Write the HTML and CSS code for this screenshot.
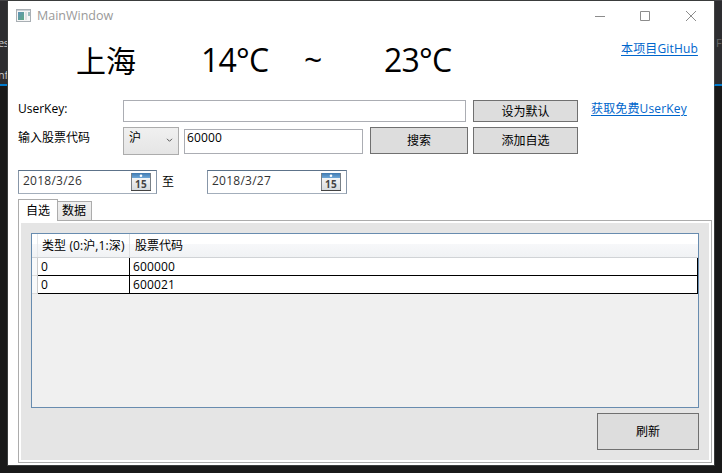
FILE: index.html
```html
<!DOCTYPE html>
<html lang="zh-CN">
<head>
<meta charset="utf-8">
<title>MainWindow</title>
<link rel="stylesheet" href="styles.css">
</head>
<body>
<div class="desktop">
  <aside class="behind left"><span class="frag es">es</span><span class="frag nf">nf</span></aside>
  <main class="window">
    <header class="titlebar">
      <svg class="app-icon" width="16" height="14" viewBox="0 0 16 14">
        <defs><linearGradient id="app" x1="0" y1="0" x2="1" y2="1"><stop offset="0" stop-color="#5f93b8"/><stop offset="1" stop-color="#5fa884"/></linearGradient></defs>
        <rect x=".5" y=".5" width="14" height="12" fill="#f6f6f6" stroke="#a9afb4"/>
        <path d="M1 1.5h13" stroke="#c9d0d6"/>
        <rect x="2" y="3" width="6" height="8" fill="url(#app)"/>
        <rect x="9" y="3" width="2" height="8" fill="#dfe2e4"/>
        <rect x="12" y="3" width="2" height="4" fill="#9dbfc0"/>
      </svg>
      <span class="title">MainWindow</span>
      <svg class="controls" width="103" height="12" viewBox="0 0 103 12" fill="none" stroke="#8c8c8c">
        <path d="M0 6.500h10M45.500 1.500h9v9h-9zM91 1l10 10M101 1l-10 10"/>
      </svg>
    </header>

    <section class="weather">
      <span class="city">上海</span><span class="low">14°C</span><span class="tilde">~</span><span class="high">23°C</span>
      <a class="link github">本项目GitHub</a>
    </section>

    <section class="row key-row">
      <label class="label">UserKey:</label>
      <div class="input key-input"></div>
      <button class="button wide">设为默认</button>
      <a class="link get-key">获取免费UserKey</a>
    </section>

    <section class="row code-row">
      <label class="label">输入股票代码</label>
      <div class="combo"><span>沪</span><svg width="7" height="5" viewBox="0 0 7 5" fill="none" stroke="#555"><path d="M1 .8l2.500 2.500L6 .8"/></svg></div>
      <div class="input code-input">60000</div>
      <button class="button search">搜索</button>
      <button class="button wide">添加自选</button>
    </section>

    <section class="row date-row">
      <div class="date"><span>2018/3/26</span>
        <svg class="cal" width="20" height="18" viewBox="0 0 20 18">
          <defs><linearGradient id="blue" x2="0" y2="1"><stop stop-color="#3f79b0"/><stop offset="1" stop-color="#6fa8d8"/></linearGradient><linearGradient id="page" x2="0" y2="1"><stop stop-color="#fff"/><stop offset="1" stop-color="#d5dadd"/></linearGradient></defs>
          <rect x=".5" y=".5" width="19" height="17" fill="url(#page)" stroke="#788087"/><path d="M0 17.500h20" stroke="#444"/>
          <rect x="1" y="0" width="18" height="5" fill="url(#blue)"/><circle cx="10" cy="2.700" r="1.300" fill="#fff"/>
          <text x="10" y="15" text-anchor="middle" class="cal-day">15</text>
        </svg>
      </div>
      <span class="to">至</span>
      <div class="date second"><span>2018/3/27</span>
        <svg class="cal" width="20" height="18" viewBox="0 0 20 18">
          <rect x=".5" y=".5" width="19" height="17" fill="url(#page)" stroke="#788087"/><path d="M0 17.500h20" stroke="#444"/>
          <rect x="1" y="0" width="18" height="5" fill="url(#blue)"/><circle cx="10" cy="2.700" r="1.300" fill="#fff"/>
          <text x="10" y="15" text-anchor="middle" class="cal-day">15</text>
        </svg>
      </div>
    </section>

    <nav class="tabs"><span class="tab active">自选</span><span class="tab">数据</span></nav>
    <section class="panel">
      <div class="panel-body">
        <div class="grid">
          <div class="grid-head"><span class="corner"></span><span class="head type">类型 (0:沪,1:深)</span><span class="head">股票代码</span></div>
          <div class="grid-row"><span class="row-head"></span><span class="cell type">0</span><span class="cell code">600000</span></div>
          <div class="grid-row"><span class="row-head"></span><span class="cell type">0</span><span class="cell code">600021</span></div>
        </div>
        <button class="button refresh">刷新</button>
      </div>
    </section>
  </main>
  <aside class="behind right"><span class="frag f">F</span></aside>
</div>
</body>
</html>
```

FILE: styles.css
```css
* { box-sizing: border-box; }
body {
  margin: 0;
  width: 722px;
  height: 473px;
  overflow: hidden;
  font: 12px/16px "Open Sans", "Noto Sans CJK SC", sans-serif;
  color: #000;
}
.desktop { display: flex; height: 473px; padding-top: 1px; background: #191919; box-shadow: inset 0 1px #434346; }
.behind { flex: none; height: 85px; background: #2d2d30; border-bottom: 2px solid #007acc; overflow: hidden; }
.left { width: 8px; border-right: 1px solid #333; }
.right { width: 8px; border-left: 1px solid #444; }
.frag { display: block; color: #c8c8c8; font-size: 11px; }
.es { margin: 34px 0 0 -2px; letter-spacing: -.5px; }
.nf { margin: 16px 0 0 -2px; letter-spacing: -.3px; }
.f { margin: 34px 0 0 1px; color: #666; }
.window { flex: none; width: 706px; height: 464px; background: #fff; box-shadow: 0 0 0 1px #3a3c3c; }

.titlebar { display: flex; align-items: center; height: 29px; padding-left: 8px; }
.title { margin-left: 5px; color: #999; font-size: 12.5px; }
.controls { margin-left: auto; margin-right: 16px; }

.weather { display: flex; height: 70px; font-size: 32px; line-height: 60px; white-space: nowrap; letter-spacing: -.8px; }
.city { width: 125px; margin-left: 68px; font-size: 30px; letter-spacing: 0; line-height: 62px; }
.low { width: 103px; }
.tilde { width: 80px; }
.high { width: 237px; }
.link { color: #0066cc; font-size: 12px; line-height: 16px; letter-spacing: .15px; text-decoration: underline; text-underline-offset: 2px; white-space: nowrap; }
.github { margin-top: 11px; }

.row { display: flex; align-items: flex-start; padding-left: 10px; }
.key-row { height: 27px; }
.code-row { height: 43px; }
.date-row { height: 29px; }
.label { width: 105px; white-space: nowrap; }
.key-row .label, .get-key { padding-top: 1px; }
.code-row .label { padding-top: 3px; }
.input { border: 1px solid #abadb3; background: #fff; }
.key-input { width: 343px; height: 22px; margin-right: 7px; }
.code-input { width: 179px; height: 25px; margin: 2px 7px 0 5px; padding-left: 2px; letter-spacing: .15px; }
.button { margin: 0; padding: 1px 0 0; border: 1px solid #707070; border-radius: 0; background: #ddd; color: #000; font: inherit; text-align: center; }
.wide { width: 105px; height: 27px; }
.key-row .wide { height: 22px; padding-top: 2px; }
.get-key { margin-left: 13px; }
.search { width: 98px; height: 27px; margin-right: 5px; }
.combo { display: flex; justify-content: space-between; width: 56px; height: 28px; padding: 2px 5px; border: 1px solid #acacac; background: linear-gradient(#f0f0f0, #e5e5e5); }
.combo svg { margin-top: 8px; }
.date { display: flex; justify-content: space-between; width: 139px; height: 24px; padding: 2px 5px 0 4px; border: 1px solid; border-color: #5d738a #8796a8 #a3aebb; color: #333; letter-spacing: .25px; }
.date.second { width: 140px; }
.cal-day { font: bold 10px "Open Sans", sans-serif; fill: #444; }
.to { width: 50px; padding: 4px 0 0 5px; }

.tabs { display: flex; align-items: flex-end; height: 21px; padding-left: 10px; }
.tab { width: 34px; height: 19px; padding-left: 4px; border: 1px solid #acacac; border-left: 0; border-bottom: 0; background: linear-gradient(#f0f0f0, #e5e5e5); line-height: 18px; }
.tab.active { width: 40px; height: 22px; margin-bottom: -1px; padding-left: 7px; border-left: 1px solid #acacac; background: #fff; line-height: 21px; z-index: 1; }
.panel { width: 694px; height: 243px; margin-left: 10px; padding: 2px; border: 1px solid #acacac; background: #fff; }
.panel-body { display: flex; flex-direction: column; height: 237px; padding: 10px 10px 0; background: #e5e5e5; }
.grid { height: 175px; border: 1px solid #688caf; background: #f0f0f0; }
.grid-head { display: flex; height: 24px; border-bottom: 1px solid #d0d3d6; background: linear-gradient(#fff 0 42%, #f7f8fa 43%, #f0f2f4); }
.corner, .row-head { width: 6px; border-right: 1px solid #ccc; }
.corner { border-right-color: #e6e8ea; }
.head { padding: 4px 0 0 5px; white-space: nowrap; }
.head.type { width: 92px; padding-left: 4px; border-right: 1px solid #dfe1e3; letter-spacing: .1px; }
.grid-row { display: flex; height: 18px; }
.row-head { background: #f8f9fa; border-bottom: 1px solid #ddd; }
.cell { border-right: 1px solid #000; border-bottom: 1px solid #000; background: #fff; padding-left: 3px; line-height: 18px; letter-spacing: .15px; }
.cell.type { width: 92px; }
.cell.code { flex: 1; }
.refresh { align-self: flex-end; width: 102px; height: 37px; margin-top: 5px; }
```
